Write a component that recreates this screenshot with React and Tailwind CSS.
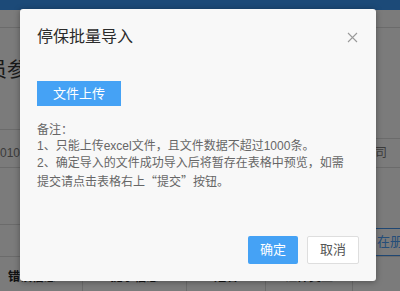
import React from "react";

const FONT = "font-['Liberation_Sans','Noto_Sans_CJK_SC',sans-serif]";

function CloseIcon() {
  return (
    <svg width="11" height="11" viewBox="0 0 11 11" className="mr-[1px]">
      <path d="M1 1 L10 10 M10 1 L1 10" stroke="#9a9a9a" strokeWidth="1.1" fill="none" />
    </svg>
  );
}

function BackgroundPage() {
  return (
    <div className="flex h-full w-full flex-col bg-[#f6f6f6]">
      <div className="h-[11px] bg-[#3894f0]" />
      <div className="h-[20px] border-b border-[#d6d6d6]" />
      <div className="flex h-[234px]">
        {/* left side of the table */}
        <div className="flex w-[200px] min-w-0 shrink-0 flex-col">
          <div className="h-[102px] border-b border-[#d6d6d6] pt-[28px]">
            <div className="-ml-[13px] text-[20px] leading-[28px] whitespace-nowrap text-[#333]">员参</div>
          </div>
          <div className="h-[38px] border-b border-[#d6d6d6] pt-[15px]">
            <div className="text-[12px] leading-[16px] text-[#777]">010</div>
          </div>
          <div className="h-[57px] border-b border-[#d6d6d6]" />
          <div className="flex-1" />
        </div>
        {/* right side of the table */}
        <div className="flex w-[200px] min-w-0 shrink-0 flex-col overflow-hidden">
          <div className="h-[111px] border-b border-[#d6d6d6]" />
          <div className="h-[29px] border-b border-[#d6d6d6] pt-[6px]">
            <div className="pl-[163px] text-[12px] leading-[16px] whitespace-nowrap text-[#777]">公司</div>
          </div>
          <div className="mt-[60px] ml-[160px] flex h-[28px] w-[80px] shrink-0 items-center border border-[#3f8fe6] pl-[16px] text-[13px] whitespace-nowrap text-[#4b9cf2]">
            在册人员
          </div>
        </div>
      </div>
      <div className="flex h-[40px] border-t border-[#d6d6d6] text-[12px] leading-[16px] font-bold text-[#222]">
        <div className="w-[83px] border-r border-[#d6d6d6] pt-[12px] pl-[8px]">错误信息</div>
        <div className="w-[104px] border-r border-[#d6d6d6] pt-[12px] text-center">提示信息</div>
        <div className="w-[79px] border-r border-[#d6d6d6] pt-[12px] text-center">姓名</div>
        <div className="w-[87px] border-r border-[#d6d6d6] pt-[12px] text-center">证件类型</div>
        <div className="flex-1" />
      </div>
    </div>
  );
}

export default function App() {
  return (
    <div className={`relative h-[291px] w-[400px] overflow-hidden ${FONT}`}>
      <BackgroundPage />
      <div className="absolute inset-0 bg-black/50" />

      <div className="absolute left-[20px] top-[9px] flex h-[272px] w-[356px] flex-col rounded-[3px] bg-[#f8f8f8] px-[17px] pt-[16px] pb-[17px] shadow-[0_1px_6px_rgba(0,0,0,0.35)]">
        <div className="flex h-[24px] items-center justify-between">
          <h3 className="text-[16px] leading-[24px] text-[#2b2b2b]">停保批量导入</h3>
          <CloseIcon />
        </div>

        <button className="mt-[32px] h-[25px] w-[84px] bg-[#45a2f5] text-[13px] text-white">
          文件上传
        </button>

        <div className="mt-[17px] text-[12px] whitespace-nowrap text-[#666]">
          <p className="leading-[15px]">备注：</p>
          <div className="leading-[17px]">
            <p>1、只能上传excel文件，且文件数据不超过1000条。</p>
            <p>2、确定导入的文件成功导入后将暂存在表格中预览，如需</p>
            <p>
              提交请点击表格右上<span className="font-['Noto_Sans_CJK_SC',sans-serif]">“提交”</span>按钮。
            </p>
          </div>
        </div>

        <div className="mt-auto flex justify-end gap-[9px]">
          <button className="h-[28px] w-[50px] rounded-[2px] bg-[#45a2f5] text-[13px] text-white">
            确定
          </button>
          <button className="h-[28px] w-[52px] rounded-[2px] border border-[#dedede] bg-white text-[13px] text-[#555]">
            取消
          </button>
        </div>
      </div>
    </div>
  );
}
